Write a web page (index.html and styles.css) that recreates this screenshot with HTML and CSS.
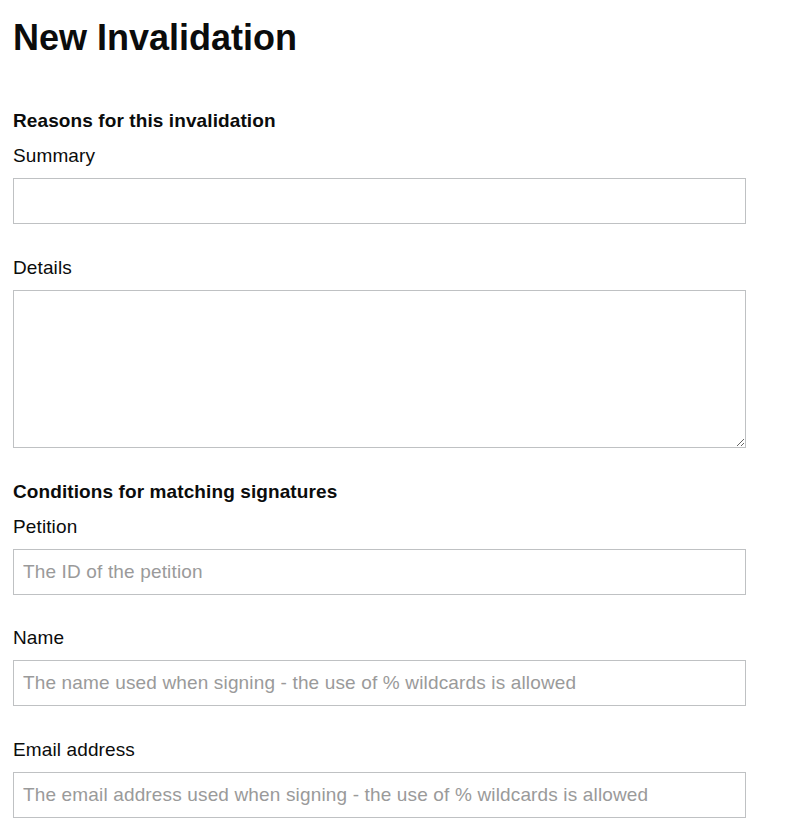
FILE: index.html
```html
<!DOCTYPE html>
<html lang="en">
<head>
<meta charset="utf-8">
<title>New Invalidation</title>
<link rel="stylesheet" href="styles.css">
</head>
<body>
<main class="page">
  <h1 class="title">New Invalidation</h1>
  <form class="form">
    <fieldset class="group">
      <legend class="group-title">Reasons for this invalidation</legend>
      <div class="field">
        <label class="label" for="summary">Summary</label>
        <input class="input" id="summary" type="text">
      </div>
      <div class="field">
        <label class="label" for="details">Details</label>
        <textarea class="input textarea" id="details"></textarea>
      </div>
    </fieldset>
    <fieldset class="group">
      <legend class="group-title">Conditions for matching signatures</legend>
      <div class="field">
        <label class="label" for="petition">Petition</label>
        <input class="input" id="petition" type="text" placeholder="The ID of the petition">
      </div>
      <div class="field">
        <label class="label" for="name">Name</label>
        <input class="input" id="name" type="text" placeholder="The name used when signing - the use of % wildcards is allowed">
      </div>
      <div class="field">
        <label class="label" for="email">Email address</label>
        <input class="input" id="email" type="text" placeholder="The email address used when signing - the use of % wildcards is allowed">
      </div>
    </fieldset>
  </form>
</main>
</body>
</html>
```

FILE: styles.css
```css
html, body {
  margin: 0;
  padding: 0;
  background: #fff;
}

body {
  font-family: "Liberation Sans", Arial, sans-serif;
  color: #0b0c0c;
  font-size: 19px;
}

.page {
  padding: 16px 13px 0;
  width: 733px;
}

.title {
  margin: 0 0 48px;
  font-size: 36px;
  line-height: 1.2;
  font-weight: 700;
}

.form {
  display: flex;
  flex-direction: column;
}

.group {
  margin: 0;
  padding: 0;
  border: 0;
  min-width: 0;
  display: block;
}

.group-title {
  padding: 0;
  margin: 0 0 7px;
  font-size: 19px;
  line-height: 28px;
  font-weight: 700;
  letter-spacing: 0.1px;
  float: left;
  width: 100%;
}

.field {
  clear: both;
  display: flex;
  flex-direction: column;
  gap: 8px;
  margin-bottom: 29.5px;
}

.group .field:last-child {
  margin-bottom: 30px;
}

.label {
  font-size: 19px;
  line-height: 28px;
  letter-spacing: 0.12px;
}

.input {
  box-sizing: border-box;
  width: 733px;
  height: 46px;
  margin: 0;
  padding: 0 9px;
  border: 1px solid #bfc1c3;
  border-radius: 0;
  background: #fff;
  font-family: "Liberation Sans", Arial, sans-serif;
  font-size: 19px;
  letter-spacing: 0.15px;
  color: #0b0c0c;
  outline: none;
}

.input::placeholder {
  color: #9a9a9a;
  opacity: 1;
}

.textarea {
  height: 158px;
  padding: 6px 9px;
  resize: vertical;
  display: block;
}
```
